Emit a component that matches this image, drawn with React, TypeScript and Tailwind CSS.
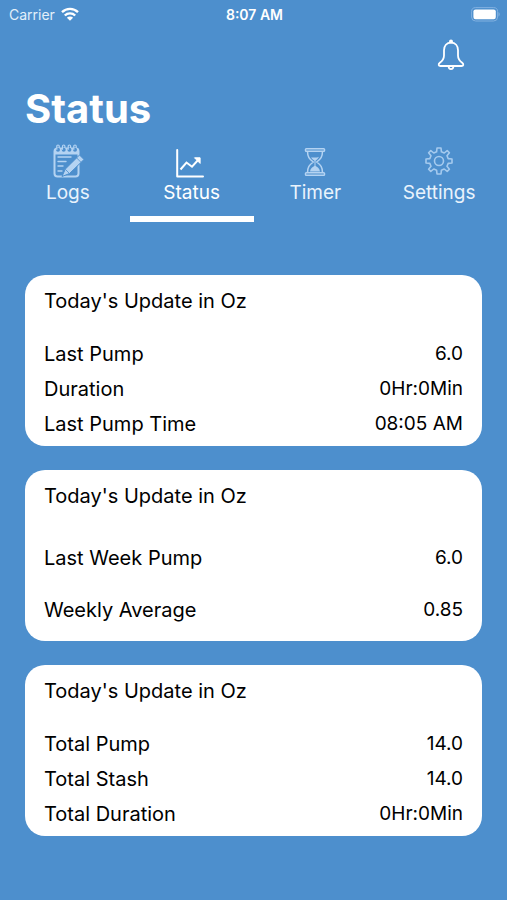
import { useState, type ReactNode } from "react"

type Row = { label: string; value: string }
type Card = { id: string; title: string; rows: Row[] }
type Tab = { id: string; label: string; icon: ReactNode }

const LogsIcon = () => (
  <svg width="34" height="34" viewBox="-2 0 34 34" fill="none" className="text-[#b4d3f2]" aria-hidden="true">
    <path d="M2 4.5h23.5v6H2z" fill="currentColor" />
    <rect x="1.5" y="4.5" width="24" height="28" rx="3" stroke="currentColor" strokeWidth="2" />
    {[5, 10.7, 16.4, 22].map((x) => (
      <g key={x}>
        <circle cx={x} cy="5.8" r="2" fill="#4d8fcd" />
        <path d={`M${x - 1.2} 5.8V2.2a1.2 1.2 0 0 1 2.4 0V4`} stroke="currentColor" strokeWidth="1.2" />
      </g>
    ))}
    <path d="M5 13h13M5 17.5h8M5 22h5M5 27h4" stroke="currentColor" strokeWidth="1.4" strokeLinecap="round" />
    <path d="m26.5 11 4.5 4.5-14.5 14-7.5 3 3.2-7.3z" fill="currentColor" stroke="#4d8fcd" strokeWidth="1" strokeLinejoin="round" />
    <path d="m23.5 13.8 4.5 4.5M12.5 25.5l4 4" stroke="#4d8fcd" strokeWidth="0.8" />
  </svg>
)

const ChartIcon = () => (
  <svg width="32" height="29" viewBox="0 0 32 29" fill="none" stroke="white" strokeWidth="2" aria-hidden="true">
    <path d="M1.2 1v26.5H27" strokeLinecap="round" strokeLinejoin="round" />
    <path d="m4.5 20.5 6-7 5.5 4.2 7-7.7" />
    <path d="M18.5 8.8h5.6v5.6z" fill="white" strokeWidth="1" />
  </svg>
)

const HourglassIcon = () => (
  <svg width="22" height="31" viewBox="0 0 22 31" fill="none" stroke="currentColor" strokeWidth="1.5" className="text-[#b4d3f2]" aria-hidden="true">
    <rect x="1.5" y="1.7" width="19" height="2.6" rx="0.8" />
    <rect x="1.5" y="25.7" width="19" height="2.6" rx="0.8" />
    <path d="M3.5 4.3c0 5.5 1.8 7.7 5.8 10.7-4 3-5.8 5.2-5.8 10.7M18.5 4.3c0 5.5-1.8 7.7-5.8 10.7 4 3 5.8 5.2 5.8 10.7" />
    <path d="M7 10.5c2.2-.3 4.6.8 8-.8-.8 2-2.4 3.2-4 4.6-1.6-1.4-3-2.2-4-3.8zM6 24.5c.4-3.1 2.2-4.5 5-5.8 2.8 1.3 4.6 2.7 5 5.8z" fill="currentColor" stroke="none" />
    <path d="M11 14v6" strokeWidth="1" />
  </svg>
)

const GearIcon = () => (
  <svg width="28" height="31" viewBox="0 0 28 31" fill="none" stroke="currentColor" strokeWidth="1.6" strokeLinejoin="round" className="text-[#a5caee]" aria-hidden="true">
    <path d="M11.6 4.8 12 1h4l.4 3.8 2.8 1.2 3-2.4 2.2 2.2-2.4 3 1.2 2.8L27 12v4l-3.8.4-1.2 2.8 2.4 3-2.2 2.2-3-2.4-2.8 1.2L16 27h-4l-.4-3.8L8.8 22l-3 2.4-2.2-2.2 2.4-3-1.2-2.8L1 16v-4l3.8-.4L6 8.8l-2.4-3 2.2-2.2 3 2.4z" />
    <circle cx="14" cy="14" r="4.5" />
  </svg>
)

const BellIcon = () => (
  <svg width="28" height="32" viewBox="0 0 28 32" fill="none" stroke="white" strokeWidth="1.8" strokeLinejoin="round" aria-hidden="true">
    <path d="M14 3.6c-4.4 0-7 3.2-7 7.6v5.2c0 3.4-1.5 5.4-4.2 7.4-1.8 1.5-1.3 3.2.7 3.2h21c2 0 2.5-1.7.7-3.2-2.7-2-4.2-4-4.2-7.4v-5.2c0-4.4-2.6-7.6-7-7.6z" />
    <circle cx="14" cy="2.4" r="2" fill="white" stroke="none" />
    <path d="M11.6 27.3c0 1.8 1 2.8 2.4 2.8s2.4-1 2.4-2.8" />
  </svg>
)

const WifiIcon = () => (
  <svg width="18" height="14" viewBox="0 0 18 14" fill="none" stroke="white" strokeWidth="2.4" aria-hidden="true">
    <path d="M1 5.1a11.6 11.6 0 0 1 16 0M3.8 8.5a7.4 7.4 0 0 1 10.4 0" />
    <path d="M9 13.8 5.9 10.8a4.4 4.4 0 0 1 6.2 0z" fill="white" stroke="none" />
  </svg>
)

const BatteryIcon = () => (
  <svg width="30" height="15" viewBox="0 0 30 15" aria-hidden="true">
    <rect x="1.6" y="0.6" width="26" height="13.4" rx="4" fill="none" stroke="#82b1e0" strokeWidth="1" />
    <rect x="3.4" y="2.4" width="22.4" height="9.8" rx="2.2" fill="white" />
    <path d="M28.5 5v4.6c1.6-.8 1.6-3.8 0-4.6z" fill="#82b1e0" />
  </svg>
)

const TABS: Tab[] = [
  { id: "logs", label: "Logs", icon: <LogsIcon /> },
  { id: "status", label: "Status", icon: <ChartIcon /> },
  { id: "timer", label: "Timer", icon: <HourglassIcon /> },
  { id: "settings", label: "Settings", icon: <GearIcon /> },
]

const CARDS: Card[] = [
  {
    id: "today",
    title: "Today's Update in Oz",
    rows: [
      { label: "Last Pump", value: "6.0" },
      { label: "Duration", value: "0Hr:0Min" },
      { label: "Last Pump Time", value: "08:05 AM" },
    ],
  },
  {
    id: "week",
    title: "Today's Update in Oz",
    rows: [
      { label: "Last Week Pump", value: "6.0" },
      { label: "Weekly Average", value: "0.85" },
    ],
  },
  {
    id: "total",
    title: "Today's Update in Oz",
    rows: [
      { label: "Total Pump", value: "14.0" },
      { label: "Total Stash", value: "14.0" },
      { label: "Total Duration", value: "0Hr:0Min" },
    ],
  },
]

const StatusCard = ({ title, rows }: Card) => (
  <section className="rounded-[20px] bg-white px-[19px] pt-3 pb-[5px] text-black">
    <h2 className="text-[20px] leading-7">{title}</h2>
    <dl className="mt-[22px] flex min-h-26 flex-col">
      {rows.map((row) => (
        <div key={row.label} className="flex flex-1 items-center justify-between text-[20px] leading-7">
          <dt>{row.label}</dt>
          <dd className="text-[19px]">{row.value}</dd>
        </div>
      ))}
    </dl>
  </section>
)

const App = () => {
  const [active, setActive] = useState("status")

  return (
    <div className="min-h-screen bg-[#4d8fcd] font-['Inter','Liberation_Sans',sans-serif] text-white">
      <div className="grid h-7 grid-cols-3 items-center pr-[7px] pl-[9px] text-[14px]">
        <div className="flex items-center gap-1.5 text-[#e3effa]">
          Carrier
          <WifiIcon />
        </div>
        <div className="text-center font-semibold">8:07 AM</div>
        <div className="flex justify-end">
          <BatteryIcon />
        </div>
      </div>

      <header className="px-[25px]">
        <div className="flex justify-end pt-[11px] pr-[17px]">
          <button type="button" aria-label="Notifications">
            <BellIcon />
          </button>
        </div>
        <h1 className="mt-3.5 text-[40px] leading-12 font-bold">Status</h1>
      </header>

      <nav className="mt-[11px] grid grid-cols-4 px-1.5">
        {TABS.map((tab) => (
          <button
            key={tab.id}
            type="button"
            aria-current={active === tab.id ? "page" : undefined}
            onClick={() => setActive(tab.id)}
            className="flex flex-col items-center"
          >
            <span className="flex h-[34px] items-end">{tab.icon}</span>
            <span className={`text-[19px] leading-[30px] ${active === tab.id ? "text-white" : "text-[#e9f3fc]"}`}>{tab.label}</span>
            <span className={`mt-2 h-1.5 w-full ${active === tab.id ? "bg-white" : "bg-transparent"}`} />
          </button>
        ))}
      </nav>

      <main className="mt-[53px] flex flex-col gap-6 px-[25px] pb-16">
        {CARDS.map((card) => (
          <StatusCard key={card.id} {...card} />
        ))}
      </main>
    </div>
  )
}

export default App
